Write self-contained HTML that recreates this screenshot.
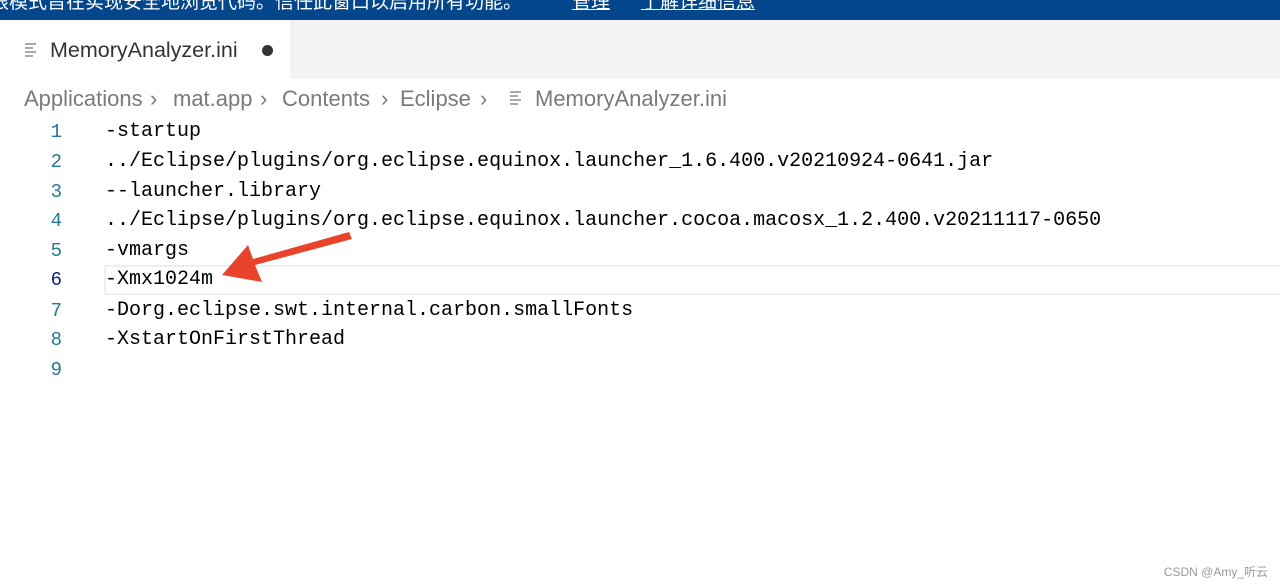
<!DOCTYPE html>
<html><head><meta charset="utf-8"><style>
body{margin:0;width:1280px;height:586px;background:#fff;overflow:hidden;position:relative;font-family:"Liberation Sans","Noto Sans CJK SC",sans-serif}
.banner{position:absolute;left:-10px;top:0;width:1290px;height:20px;background:#03468c;color:#fff;font-size:19px;line-height:6px;white-space:nowrap;overflow:hidden}
.tabbar{position:absolute;top:20px;left:0;width:1280px;height:59px;background:#f3f3f3}
.tab{position:absolute;left:0;top:0;width:290px;height:59px;background:#fff}
.tab .t{position:absolute;left:50px;top:18px;font-size:21.5px;color:#333}
.dot{position:absolute;left:262px;top:25px;width:11px;height:11px;border-radius:50%;background:#333}
.ico{position:absolute;width:11px}
.ico i{display:block;height:2px;background:#aaa;margin-bottom:2px}
.bc{position:absolute;top:86px;font-size:22px;color:#7a7a7a;white-space:nowrap}
.ln{position:absolute;left:0;width:62px;text-align:right;font-family:"Liberation Mono",monospace;font-size:19px;color:#237893}
.code{position:absolute;left:105px;font-family:"Liberation Mono",monospace;font-size:20px;color:#000;white-space:pre}
.cur{position:absolute;left:104px;top:265px;width:1180px;height:26px;border:2px solid #eee}
.wm{position:absolute;right:12px;bottom:6px;font-size:12px;color:#999}
</style></head><body>
<div class="banner">限模式旨在实现安全地浏览代码。信任此窗口以启用所有功能。<u style="position:absolute;left:582px">管理</u><u style="position:absolute;left:651px">了解详细信息</u></div>
<div class="tabbar"><div class="tab">
<div class="ico" style="left:25px;top:23px"><i></i><i style="width:8px"></i><i></i><i style="width:8px"></i></div>
<div class="t">MemoryAnalyzer.ini</div><div class="dot"></div></div></div>
<div class="bc" style="left:24px">Applications</div>
<div class="bc" style="left:150px">›</div>
<div class="bc" style="left:173px">mat.app</div>
<div class="bc" style="left:260px">›</div>
<div class="bc" style="left:282px">Contents</div>
<div class="bc" style="left:381px">›</div>
<div class="bc" style="left:400px">Eclipse</div>
<div class="bc" style="left:480px">›</div>
<div class="bc" style="left:535px">MemoryAnalyzer.ini</div>
<div class="ico" style="left:510px;top:91px"><i></i><i style="width:8px"></i><i></i><i style="width:8px"></i></div>
<div class="cur"></div>
<div class="ln" style="top:121px">1</div><div class="code" style="top:120px">-startup</div>
<div class="ln" style="top:151px">2</div><div class="code" style="top:150px">../Eclipse/plugins/org.eclipse.equinox.launcher_1.6.400.v20210924-0641.jar</div>
<div class="ln" style="top:181px">3</div><div class="code" style="top:180px">--launcher.library</div>
<div class="ln" style="top:210px">4</div><div class="code" style="top:209px">../Eclipse/plugins/org.eclipse.equinox.launcher.cocoa.macosx_1.2.400.v20211117-0650</div>
<div class="ln" style="top:240px">5</div><div class="code" style="top:239px">-vmargs</div>
<div class="ln" style="top:269px;color:#0b216f">6</div><div class="code" style="top:268px">-Xmx1024m</div>
<div class="ln" style="top:300px">7</div><div class="code" style="top:299px">-Dorg.eclipse.swt.internal.carbon.smallFonts</div>
<div class="ln" style="top:329px">8</div><div class="code" style="top:328px">-XstartOnFirstThread</div>
<div class="ln" style="top:359px">9</div>
<svg style="position:absolute;left:0;top:0" width="1280" height="586"><path d="M349 232 L352 239 L255 265 L262 282 L222 275 L248 245 L253 259 Z" fill="#e8432b"/></svg>
<div class="wm">CSDN @Amy_听云</div>
</body></html>
